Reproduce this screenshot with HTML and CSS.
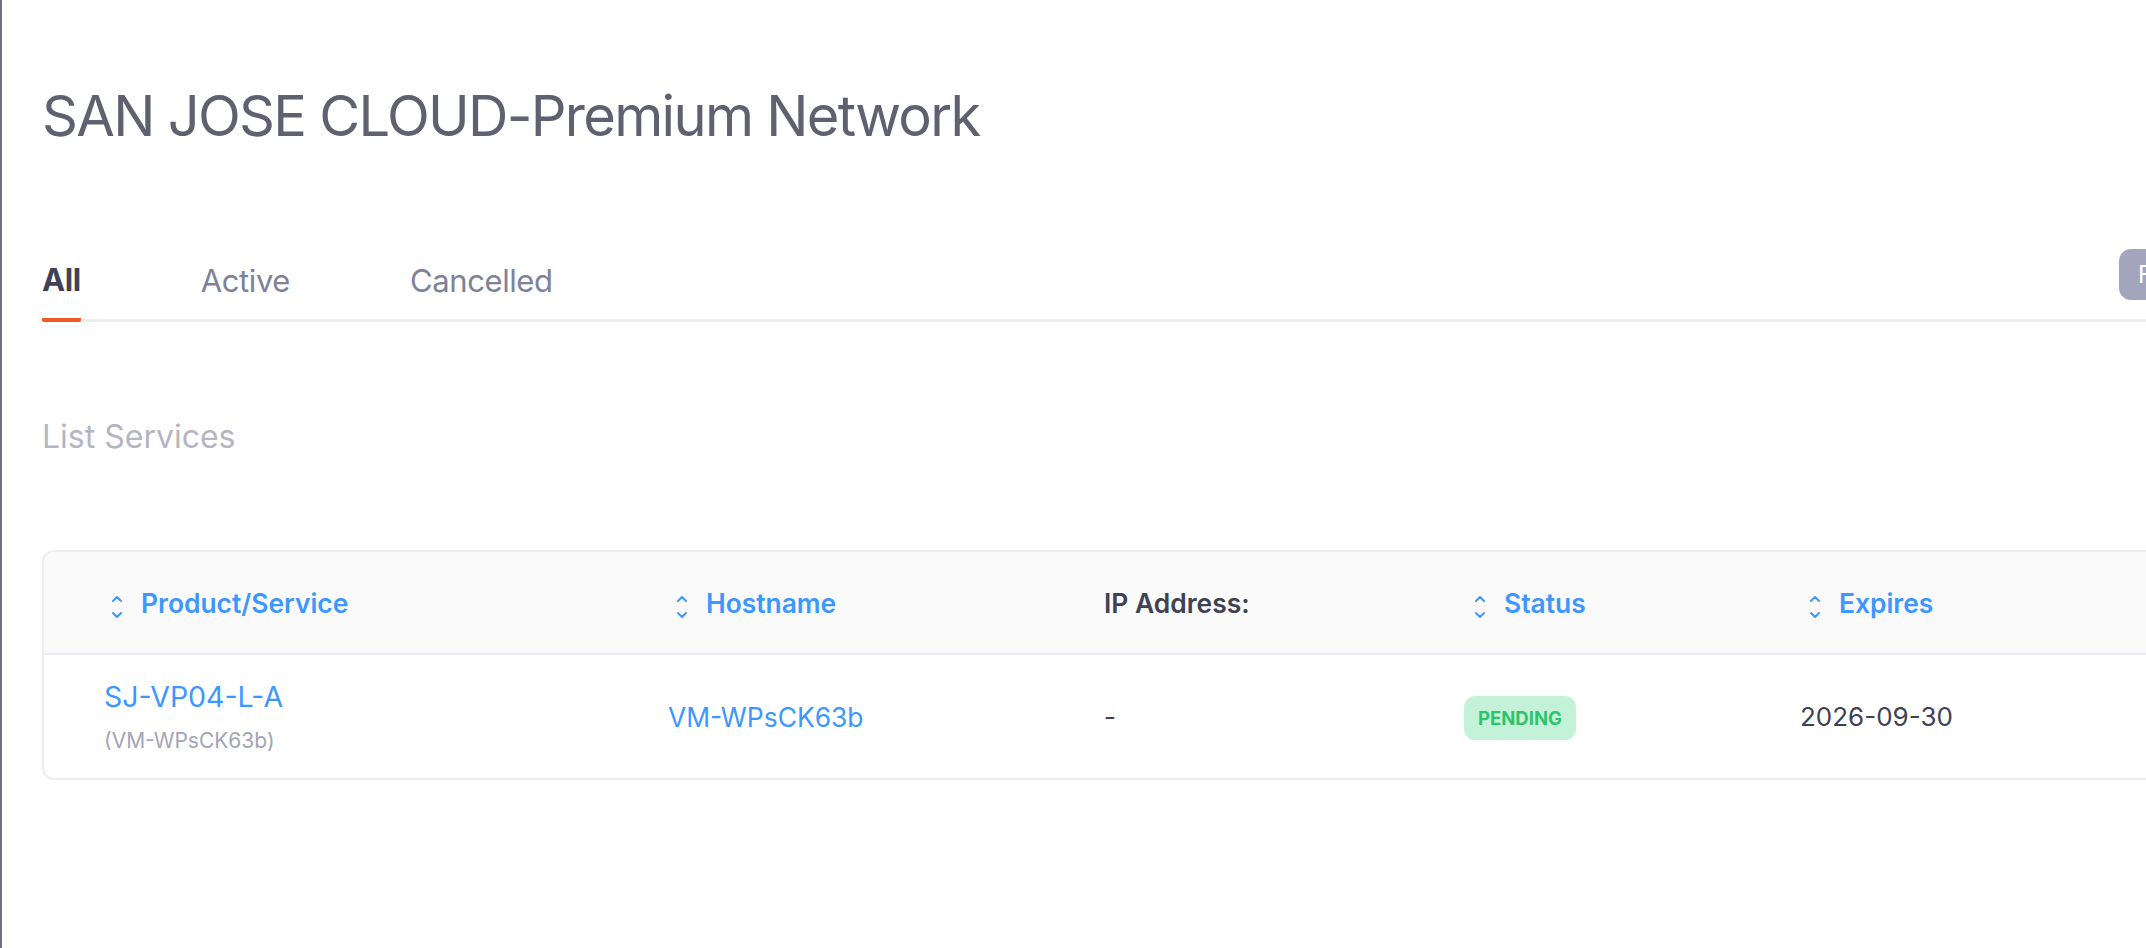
FILE: index.html
```html
<!DOCTYPE html>
<html lang="en">
<head>
<meta charset="utf-8">
<title>SAN JOSE CLOUD-Premium Network</title>
<link rel="stylesheet" href="styles.css">
</head>
<body>
<div class="frame">
  <div class="content">
    <h1 class="title">SAN JOSE CLOUD-Premium Network</h1>
    <div class="tabs">
      <a class="tab active">All</a>
      <a class="tab">Active</a>
      <a class="tab">Cancelled</a>
      <button class="filter-btn">Filter</button>
    </div>
    <h2 class="section-title">List Services</h2>
    <div class="card">
      <table class="services">
        <colgroup>
          <col class="c1"><col class="c2"><col class="c3"><col class="c4"><col class="c5">
        </colgroup>
        <thead>
          <tr>
            <th class="sortable"><span class="sort"><svg viewBox="0 0 12 24" width="12" height="24"><path d="M2 6 L6 2 L10 6" /><path d="M2 18 L6 22 L10 18" /></svg></span>Product/Service</th>
            <th class="sortable"><span class="sort"><svg viewBox="0 0 12 24" width="12" height="24"><path d="M2 6 L6 2 L10 6" /><path d="M2 18 L6 22 L10 18" /></svg></span>Hostname</th>
            <th class="plain">IP Address:</th>
            <th class="sortable"><span class="sort"><svg viewBox="0 0 12 24" width="12" height="24"><path d="M2 6 L6 2 L10 6" /><path d="M2 18 L6 22 L10 18" /></svg></span>Status</th>
            <th class="sortable"><span class="sort"><svg viewBox="0 0 12 24" width="12" height="24"><path d="M2 6 L6 2 L10 6" /><path d="M2 18 L6 22 L10 18" /></svg></span>Expires</th>
          </tr>
        </thead>
        <tbody>
          <tr>
            <td>
              <a class="product">SJ-VP04-L-A</a>
              <div class="sub">(VM-WPsCK63b)</div>
            </td>
            <td><a class="host">VM-WPsCK63b</a></td>
            <td class="dark">-</td>
            <td><span class="badge">PENDING</span></td>
            <td class="dark date">2026-09-30</td>
          </tr>
        </tbody>
      </table>
    </div>
  </div>
</div>
</body>
</html>
```

FILE: styles.css
```css
html, body {
  margin: 0;
  padding: 0;
  background: #ffffff;
  overflow: hidden;
}
body {
  font-family: Inter, "Liberation Sans", sans-serif;
  color: #3f4254;
}
.frame {
  border-left: 2px solid #6f6f7b;
  min-height: 948px;
  box-sizing: border-box;
  padding-left: 40px;
}
.content {
  width: 2260px;
}
.title {
  margin: 0;
  padding-top: 82px;
  font-size: 56px;
  line-height: 68px;
  font-weight: 400;
  color: #5f6170;
  letter-spacing: -1.7px;
}
.tabs {
  margin-top: 110px;
  display: flex;
  align-items: flex-end;
  gap: 120px;
  border-bottom: 3px solid #eeeeee;
}
.tab {
  font-size: 31px;
  line-height: 40px;
  padding-bottom: 18px;
  color: #7e8299;
  letter-spacing: -0.4px;
  cursor: pointer;
}
.tab.active {
  font-weight: 700;
  color: #3f4254;
  border-bottom: 4px solid #f15a24;
  margin-bottom: -3px;
  border-radius: 2px;
}
.filter-btn {
  margin-left: auto;
  align-self: flex-start;
  margin-top: -11px;
  width: 183px;
  height: 51px;
  border: none;
  border-radius: 12px;
  background: #a3a5bd;
  color: #ffffff;
  font-family: Inter, "Liberation Sans", sans-serif;
  font-size: 24px;
  text-align: left;
  padding: 0 19px;
}
.section-title {
  margin: 0;
  margin-top: 95px;
  font-size: 32px;
  line-height: 40px;
  font-weight: 400;
  color: #b5b5c3;
}
.card {
  margin-top: 93px;
  border: 2px solid #ebedf3;
  border-radius: 12px;
  overflow: hidden;
}
.services {
  width: 100%;
  border-collapse: collapse;
  table-layout: fixed;
}
.c1 { width: 624px; }
.c2 { width: 436px; }
.c3 { width: 360px; }
.c4 { width: 336px; }
.services thead tr {
  background: #fafafa;
  border-bottom: 2px solid #ebedf3;
}
.services th {
  height: 101px;
  text-align: left;
  font-size: 26.4px;
  font-weight: 600;
  padding: 0;
  white-space: nowrap;
}
.services th:nth-child(1) { padding-left: 67px; }
.services th:nth-child(2) { padding-left: 8px; }
.services th:nth-child(4) { padding-left: 10px; }
.services th:nth-child(5) { padding-left: 9px; }
.services th.sortable { color: #3e97ff; }
.services th.plain { color: #3f4254; }
.sort {
  display: inline-block;
  width: 12px;
  height: 24px;
  margin-right: 18px;
  vertical-align: -6px;
}
.sort svg {
  display: block;
  fill: none;
  stroke: #3e97ff;
  stroke-width: 2;
  stroke-linecap: round;
  stroke-linejoin: round;
}
.services td {
  height: 123px;
  padding: 0;
  font-size: 26px;
  vertical-align: middle;
}
.services td:first-child { padding-left: 60px; }
.product {
  display: block;
  color: #3e97ff;
  font-size: 28.5px;
  line-height: 34px;
}
.sub {
  margin-top: 14px;
  color: #a1a5b7;
  font-size: 21px;
  line-height: 26px;
}
.host {
  color: #3e97ff;
  font-size: 26.4px;
}
.dark {
  color: #3f4254;
  font-size: 26px;
}
.date {
  font-size: 29px;
}
.badge {
  display: inline-block;
  background: #c4f2d8;
  color: #2fc46c;
  font-weight: 700;
  font-size: 18.5px;
  line-height: 44px;
  padding: 0 14px;
  border-radius: 11px;
  margin-top: 2px;
}
```
